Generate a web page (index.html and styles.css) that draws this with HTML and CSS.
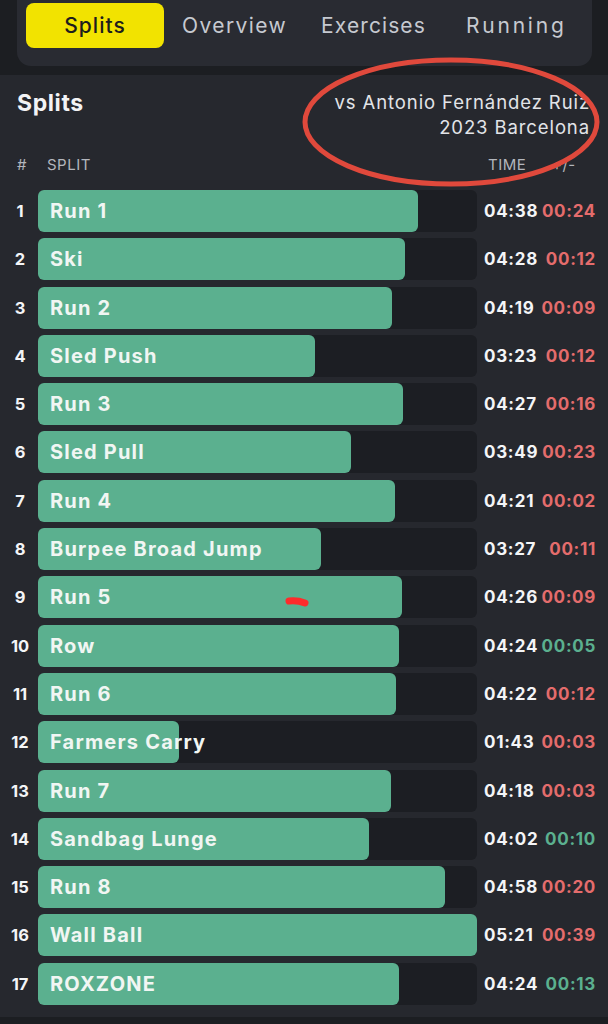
FILE: index.html
```html
<!DOCTYPE html>
<html>
<head>
<meta charset="utf-8">
<link rel="stylesheet" href="styles.css">
</head>
<body>
<div class="top">
  <nav class="tabs">
    <div class="tab active">Splits</div>
    <div class="tab">Overview</div>
    <div class="tab">Exercises</div>
    <div class="tab">Running</div>
  </nav>
</div>
<main class="panel">
  <header class="head">
    <h1 class="title">Splits</h1>
    <div class="vs">vs Antonio Fernández Ruiz<br>2023 Barcelona</div>
  </header>
  <div class="cols">
    <span class="c-num">#</span>
    <span class="c-split">SPLIT</span>
    <span class="c-time">TIME</span>
    <span class="c-delta">+/-</span>
  </div>
  <div class="rows">
    <div class="row"><span class="num">1</span><div class="track"><div class="fill" style="width:86.6%"></div><span class="name">Run 1</span></div><div class="vals"><span class="time">04:38</span><span class="delta bad">00:24</span></div></div>
    <div class="row"><span class="num">2</span><div class="track"><div class="fill" style="width:83.5%"></div><span class="name">Ski</span></div><div class="vals"><span class="time">04:28</span><span class="delta bad">00:12</span></div></div>
    <div class="row"><span class="num">3</span><div class="track"><div class="fill" style="width:80.7%"></div><span class="name">Run 2</span></div><div class="vals"><span class="time">04:19</span><span class="delta bad">00:09</span></div></div>
    <div class="row"><span class="num">4</span><div class="track"><div class="fill" style="width:63.2%"></div><span class="name">Sled Push</span></div><div class="vals"><span class="time">03:23</span><span class="delta bad">00:12</span></div></div>
    <div class="row"><span class="num">5</span><div class="track"><div class="fill" style="width:83.2%"></div><span class="name">Run 3</span></div><div class="vals"><span class="time">04:27</span><span class="delta bad">00:16</span></div></div>
    <div class="row"><span class="num">6</span><div class="track"><div class="fill" style="width:71.3%"></div><span class="name">Sled Pull</span></div><div class="vals"><span class="time">03:49</span><span class="delta bad">00:23</span></div></div>
    <div class="row"><span class="num">7</span><div class="track"><div class="fill" style="width:81.3%"></div><span class="name">Run 4</span></div><div class="vals"><span class="time">04:21</span><span class="delta bad">00:02</span></div></div>
    <div class="row"><span class="num">8</span><div class="track"><div class="fill" style="width:64.5%"></div><span class="name">Burpee Broad Jump</span></div><div class="vals"><span class="time">03:27</span><span class="delta bad">00:11</span></div></div>
    <div class="row"><span class="num">9</span><div class="track"><div class="fill" style="width:83.0%"></div><span class="name">Run 5</span></div><div class="vals"><span class="time">04:26</span><span class="delta bad">00:09</span></div></div>
    <div class="row"><span class="num">10</span><div class="track"><div class="fill" style="width:82.2%"></div><span class="name">Row</span></div><div class="vals"><span class="time">04:24</span><span class="delta good">00:05</span></div></div>
    <div class="row"><span class="num">11</span><div class="track"><div class="fill" style="width:81.6%"></div><span class="name">Run 6</span></div><div class="vals"><span class="time">04:22</span><span class="delta bad">00:12</span></div></div>
    <div class="row"><span class="num">12</span><div class="track"><div class="fill" style="width:32.1%"></div><span class="name">Farmers Carry</span></div><div class="vals"><span class="time">01:43</span><span class="delta bad">00:03</span></div></div>
    <div class="row"><span class="num">13</span><div class="track"><div class="fill" style="width:80.4%"></div><span class="name">Run 7</span></div><div class="vals"><span class="time">04:18</span><span class="delta bad">00:03</span></div></div>
    <div class="row"><span class="num">14</span><div class="track"><div class="fill" style="width:75.4%"></div><span class="name">Sandbag Lunge</span></div><div class="vals"><span class="time">04:02</span><span class="delta good">00:10</span></div></div>
    <div class="row"><span class="num">15</span><div class="track"><div class="fill" style="width:92.8%"></div><span class="name">Run 8</span></div><div class="vals"><span class="time">04:58</span><span class="delta bad">00:20</span></div></div>
    <div class="row"><span class="num">16</span><div class="track"><div class="fill" style="width:100%"></div><span class="name">Wall Ball</span></div><div class="vals"><span class="time">05:21</span><span class="delta bad">00:39</span></div></div>
    <div class="row"><span class="num">17</span><div class="track"><div class="fill" style="width:82.2%"></div><span class="name">ROXZONE</span></div><div class="vals"><span class="time">04:24</span><span class="delta good">00:13</span></div></div>
  </div>
</main>
<svg class="marks" width="608" height="1024" viewBox="0 0 608 1024">
  <ellipse cx="451" cy="122" rx="146" ry="62" fill="none" stroke="#e0493c" stroke-width="5"/>
  <path d="M289 601 Q297 600 305 603" fill="none" stroke="#ff2b2b" stroke-width="7" stroke-linecap="round"/>
</svg>
</body>
</html>
```
FILE: styles.css
```css
* { box-sizing: border-box; }
html, body { margin: 0; padding: 0; }
body {
  width: 608px;
  height: 1024px;
  overflow: hidden;
  background: #1c1e22;
  font-family: "Inter", "Noto Sans", sans-serif;
  color: #eef0f2;
  position: relative;
}
.top {
  height: 75px;
  padding: 0 16px 0 17px;
}
.tabs {
  height: 66px;
  background: #292b32;
  border-radius: 0 0 14px 14px;
  display: flex;
  align-items: flex-start;
  padding: 3px 0 0 9px;
}
.tab {
  height: 45px;
  display: flex;
  align-items: center;
  justify-content: center;
  font-size: 21px;
  font-weight: 400;
  color: #c6c9d0;
  letter-spacing: 1.4px;
}
.tab.active {
  width: 138px;
  background: #f2e300;
  color: #1d1d1d;
  font-weight: 500;
  border-radius: 8px;
  margin-right: 18px;
  letter-spacing: 1px;
}
.tab:nth-child(2) { margin-right: 34px; }
.tab:nth-child(3) { margin-right: 40px; letter-spacing: 1.1px; }
.tab:nth-child(4) { letter-spacing: 2.8px; }
.panel {
  background: #26282e;
  height: 942px;
  padding: 10px 12px 0 0;
}
.head {
  display: flex;
  justify-content: space-between;
  align-items: flex-start;
  padding-left: 17px;
  height: 70px;
}
.title {
  margin: 4px 0 0;
  font-size: 23px;
  font-weight: 700;
  color: #f2f3f5;
  letter-spacing: 0.6px;
}
.vs {
  text-align: right;
  font-size: 18.5px;
  line-height: 25px;
  letter-spacing: 0.9px;
  color: #e2e4e8;
  margin-top: 5px;
  margin-right: 6px;
}
.cols {
  display: flex;
  align-items: center;
  height: 24px;
  font-size: 15px;
  color: #b3b6bd;
  letter-spacing: 0.5px;
  margin-top: -3px;
}
.c-num { width: 30px; padding-left: 17px; }
.c-split { flex: 1; padding-left: 17px; }
.c-time { width: 64px; }
.c-delta { width: 44px; }
.rows {
  display: flex;
  flex-direction: column;
  gap: 6.3px;
  margin-top: 14px;
}
.row {
  display: grid;
  grid-template-columns: 38px 439px 1fr;
  align-items: center;
  height: 42px;
}
.num {
  font-size: 16.5px;
  font-weight: 700;
  text-align: center;
  padding-left: 4px;
  padding-right: 2px;
  color: #f4f5f7;
}
.track {
  position: relative;
  height: 42px;
  background: #1c1e23;
  border-radius: 6px;
  display: flex;
  align-items: center;
}
.fill {
  position: absolute;
  left: 0;
  top: 0;
  bottom: 0;
  background: #5bb08f;
  border-radius: 6px;
}
.name {
  position: relative;
  padding-left: 12px;
  font-size: 20px;
  font-weight: 700;
  color: #f1f6f3;
  letter-spacing: 1.2px;
  white-space: nowrap;
}
.vals {
  display: flex;
  justify-content: space-between;
  align-items: center;
  padding-left: 7px;
  font-size: 17px;
  font-weight: 700;
  letter-spacing: 0.7px;
  white-space: nowrap;
}
.time { color: #f4f5f7; }
.delta.bad { color: #e46c6c; }
.delta.good { color: #5bb08f; }
.marks {
  position: absolute;
  left: 0;
  top: 0;
  pointer-events: none;
}
```
